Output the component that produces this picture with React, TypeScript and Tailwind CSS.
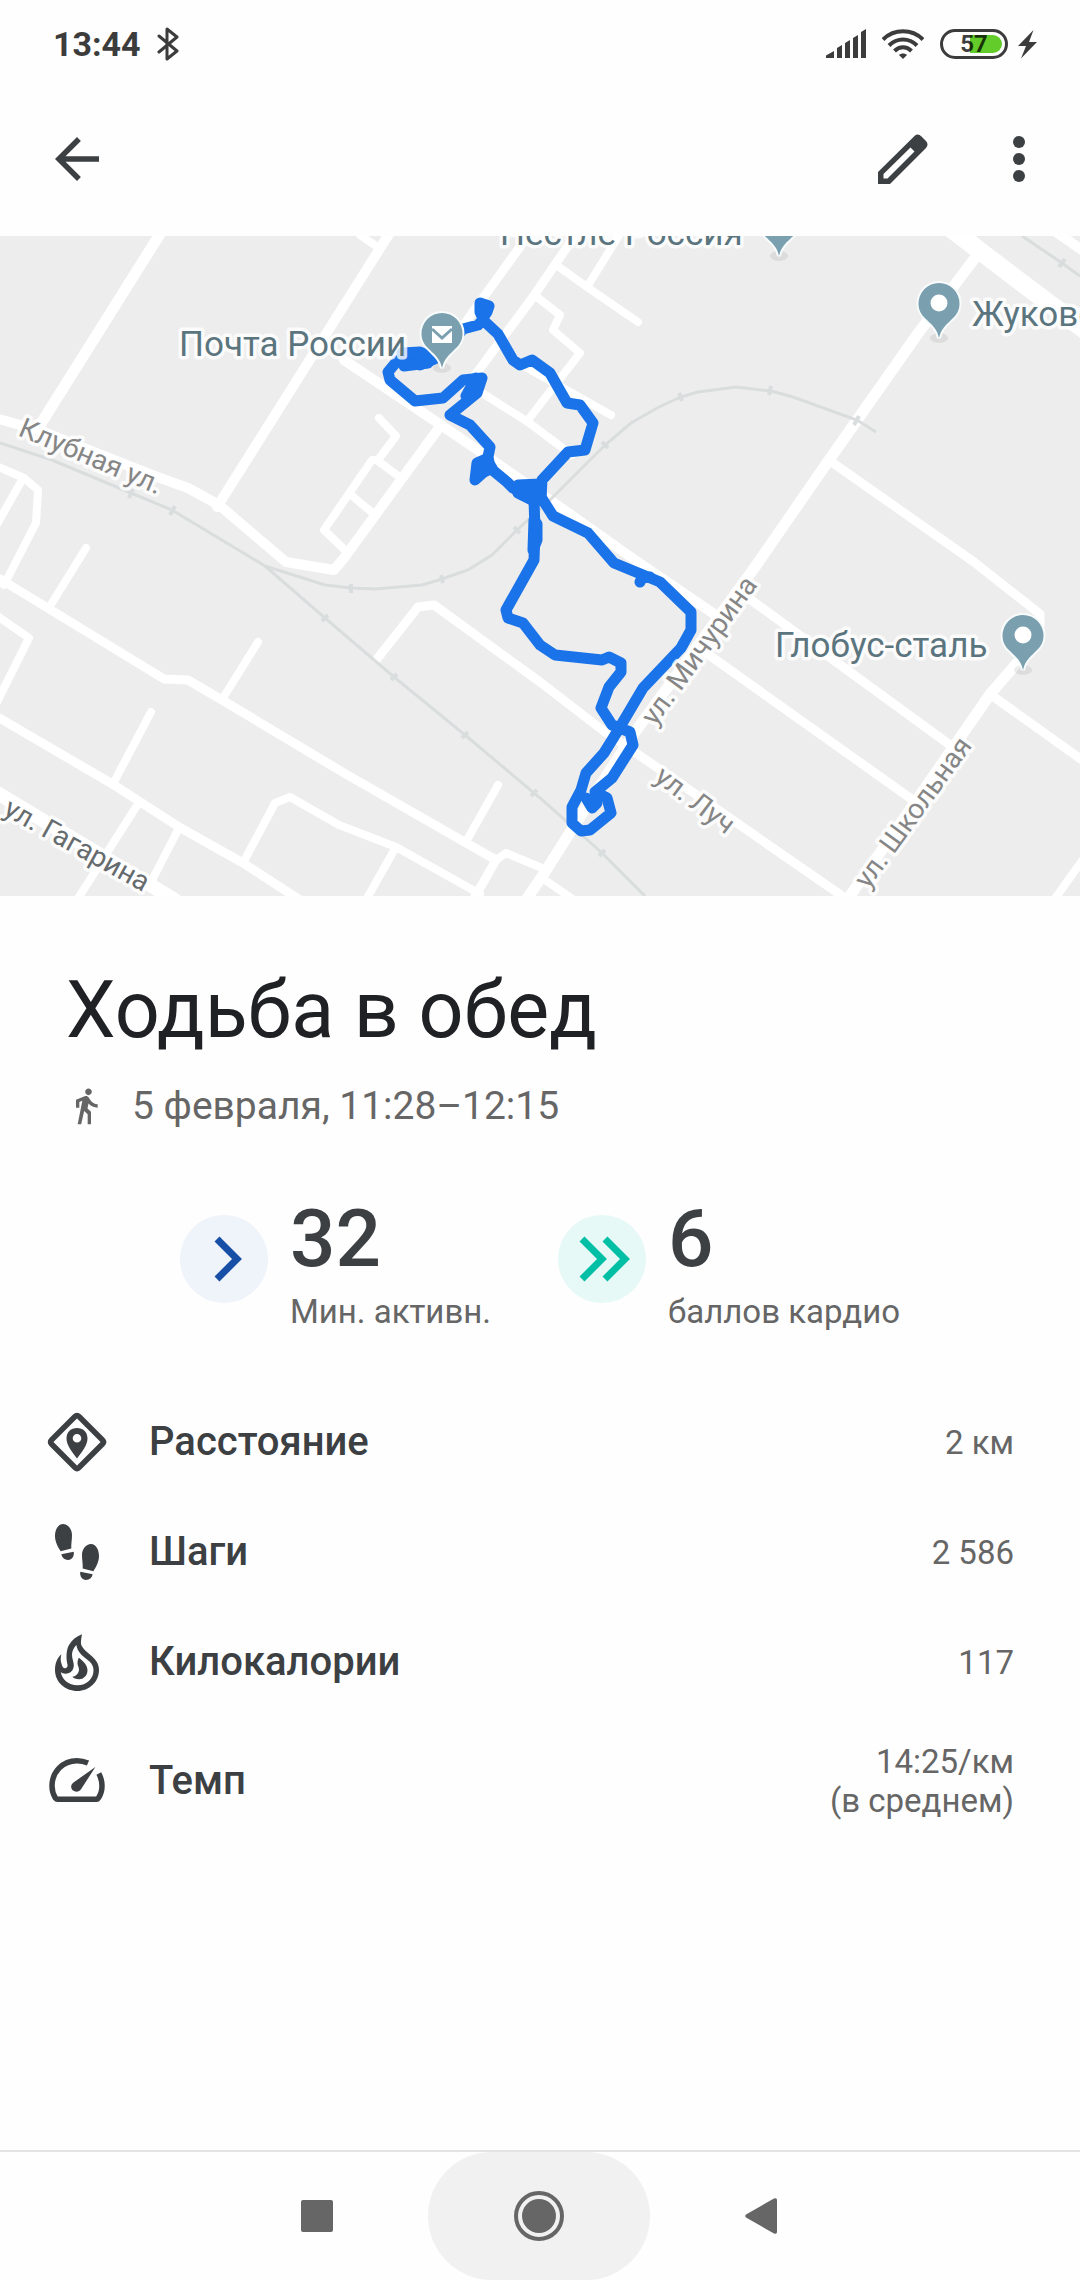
import type { ReactNode } from "react";
import { MdArrowBack, MdDirectionsWalk } from "react-icons/md";

/* -------------------------------------------------------------------------- */
/* Data                                                                       */
/* -------------------------------------------------------------------------- */

interface Road {
  d: string;
  width?: number;
}

interface StreetLabel {
  text: string;
  x: number;
  y: number;
  angle: number;
  dark?: boolean;
}

interface Metric {
  label: string;
  value: string[];
  icon: ReactNode;
}

const ROADS: Road[] = [
  // north-west
  { d: "M160 234L40 425", width: 11 },
  { d: "M389 234L217 507", width: 10 },
  { d: "M360 235L379 248" },
  { d: "M-5 418L38 430L152 475L188 488L219 505L286 562L334 570L344 558L441 425", width: 10 },
  { d: "M344 360L441 425L482 453L550 500L635 560L720 618", width: 10 },
  { d: "M379 418L396 436L378 460H372L324 530L348 553" },
  { d: "M378 461L401 478M351 495L374 514" },
  // centre block
  { d: "M522 244L455 337", width: 9 },
  { d: "M576 234L533 297L473 378", width: 9 },
  { d: "M620 234L587 287M559 267L587 287L638 322" },
  { d: "M537 297L560 315L553 330L580 353L528 420" },
  { d: "M482 393L528 422L572 455" },
  { d: "M522 365L611 415" },
  // east
  { d: "M950 228L1022 283L1090 334", width: 18 },
  { d: "M1056 232L1085 252", width: 10 },
  { d: "M975 258L919 332L829 460L755 567L633 735L583 812L545 872L526 900", width: 11 },
  { d: "M833 463L974 562L1040 614V625", width: 9 },
  { d: "M1024 655L991 693L850 896", width: 11 },
  { d: "M994 697L1085 762", width: 9 },
  { d: "M747 597L950 745", width: 9 },
  { d: "M702 650L910 798", width: 9 },
  { d: "M1084 858L1054 900" },
  { d: "M377 659L418 607L434 605L540 682L605 732L636 753L845 898", width: 9 },
  // south-west
  { d: "M-4 466L24 478L38 490L36 523L4 585" },
  { d: "M22 480L-4 526M86 548L52 603" },
  { d: "M-4 577L5 582L164 679L188 680L222 700L344 773L496 860L472 902", width: 9 },
  { d: "M496 860L506 853L542 868M545 880L574 900" },
  { d: "M-4 615L29 638L-4 704" },
  { d: "M-4 716L114 785L179 827L243 863L300 900", width: 9 },
  { d: "M223 698L258 642M114 782L151 712M467 840L498 785" },
  { d: "M136 807L77 900M179 828L150 884" },
  { d: "M243 863L275 803L290 797L339 825L396 847L480 894M396 847L366 900" },
  { d: "M-6 791L175 900", width: 14 },
];

const RAILS = [
  "M0 443L52 460L131 493L172 510L255 560L265 566L325 618L394 677L465 735L540 798L602 853L645 896",
  "M265 566L325 585L351 588L375 589L422 585L442 579L468 570L492 555L517 530L550 500L605 445L631 423L659 407L681 397L698 392L736 387L771 391L793 397L857 420L876 432",
  "M1022 236L1062 263L1080 276",
];

const RAIL_TIES =
  "M129 498L133 489M170 515L175 506M322 621L328 615M391 680L397 674M462 738L468 732M531 796L537 790M599 856L605 850M351 584V593M441 575L443 583M514 527L520 533M602 442L608 448M679 393L682 401M771 386L769 395M859 416L854 425M1065 259L1059 267";

const ROUTE =
  "M483 305V320L498 334L513 360L520 365L532 360L550 373L567 403L580 405L593 423L585 450L568 452L542 480L541 497L553 516L588 533L614 563L648 577L660 582L691 612V630L681 648L643 688L617 732L604 753L586 773L581 790L572 807V823L581 831L590 830L611 813L607 798L595 792L612 778L633 745L630 732L612 725L601 708L609 687L621 672V663L609 657L602 660L555 655L540 645L523 623L508 618L506 610L534 560L535 530L534 500L513 488L507 482L490 468L488 457L490 447L470 425L450 415L477 393L482 378L463 380L443 398L415 401L390 380L388 372L398 360L420 365L437 358L463 329L478 325L483 320";

// Places where the tracker lingered and the line piles up on itself
const ROUTE_KNOTS =
  "M480 303L489 306L487 312L483 318L480 312ZM402 353L420 352L432 357L428 363L404 366ZM477 463L486 459L492 468L484 472L475 480ZM476 378L480 380L474 392L466 396ZM518 485L541 484L541 495L532 500L518 493ZM534 520L537 524V540L533 550ZM640 582L642 578L650 577M586 798L592 808L597 803Z";

const STREETS: StreetLabel[] = [
  { text: "Клубная ул.", x: 17, y: 435, angle: 23 },
  { text: "ул. Мичурина", x: 655, y: 727, angle: -54 },
  { text: "ул. Школьная", x: 868, y: 890, angle: -54 },
  { text: "ул. Луч", x: 653, y: 780, angle: 37 },
  { text: "ул. Гагарина", x: 2, y: 814, angle: 29, dark: true },
];

/* -------------------------------------------------------------------------- */
/* Icons                                                                      */
/* -------------------------------------------------------------------------- */

function DistanceIcon() {
  return (
    <svg viewBox="0 0 60 60" className="size-[60px]" fill="none" aria-hidden="true">
      <path
        d="M28 4.500Q30 2.500 32 4.500L55.500 28Q57.500 30 55.500 32L32 55.500Q30 57.500 28 55.500L4.500 32Q2.500 30 4.500 28Z"
        stroke="currentColor"
        strokeWidth="5.500"
      />
      <path
        fillRule="evenodd"
        fill="currentColor"
        d="M30 16C24 16 19.500 20 19.500 26.500C19.500 33 25 40 30 46.500C35 40 40.500 33 40.500 26.500C40.500 20 36 16 30 16ZM30 22A4.300 4.300 0 1 1 30 30.600A4.300 4.300 0 1 1 30 22Z"
      />
    </svg>
  );
}

function StepsIcon() {
  const foot = (
    <>
      <path d="M16 2C11 2 8 8 8 14C8 20 11 25 13.600 29.200L24.300 26.600C24 22 25 18 25 13C25 7 21 2 16 2Z" />
      <path d="M14.300 32.300L26.700 29.700C27.500 34 25 38 21 38C17.500 38 15.300 36 14.300 32.300Z" />
    </>
  );
  return (
    <svg viewBox="0 0 60 60" className="size-[60px]" fill="currentColor" aria-hidden="true">
      {foot}
      <g transform="translate(60 20) scale(-1 1)">{foot}</g>
    </svg>
  );
}

function FlameIcon() {
  return (
    <svg viewBox="0 0 60 60" className="size-[60px]" fill="currentColor" aria-hidden="true">
      <path
        fillRule="evenodd"
        d="M35 2.300C34 8 33.500 11 34.500 13.500C36 17 40 20 43.500 23C49 27.500 52 32 52 38C52 50 42 59 30.500 59C18 59 8 50 8 38C8 32 10 26 14.300 22.300C13.500 26 13.500 29 14.300 31C15 34 16 36 17.500 36.300C19.500 36.500 21 35 20.500 32.500C19 27 19 18 22 13C25 8 29 4.500 35 2.300ZM29.400 13C26.500 16 25 19 25 23C25 27 27 30 26.800 34C26.500 38.500 23 41.800 18.500 41.700C16.500 41.600 15 41 13.800 40C15 47.500 21.500 53.300 30.500 53.300C39.500 53.300 46.500 47 46.500 38.300C46.500 33 43.500 30 39.500 27C35 23.500 30.500 20 29.400 13Z"
      />
      <path d="M31.900 25.700C37 29.500 40.500 33.500 40.500 38.300C40.500 44 36 47.500 32 47.300C29 47.200 26.500 46.500 25.300 44.800C28.500 44.500 31.500 42 32 38C32.200 35 30.500 34 30.500 31C30.500 29 31 27.500 31.900 25.700Z" />
    </svg>
  );
}

function PaceIcon() {
  return (
    <svg viewBox="0 0 60 60" className="size-[60px]" fill="none" aria-hidden="true">
      <path
        d="M41 12C37.500 10.500 34 9.700 30 9.700C15.500 9.700 5 21 5 35C5 40 6.500 44 8.500 47.200Q9.300 48.300 10.500 48.300H49.500Q50.700 48.300 51.300 47.200C53.500 44 55 40 55 35C55 30 54 26.500 51.800 22.500"
        stroke="currentColor"
        strokeWidth="5.500"
      />
      <path
        d="M48.400 16L34.500 37.500C32.500 41 28.500 41.500 26 39.500C23.500 37.500 23.500 33.500 26.500 31.500Z"
        fill="currentColor"
      />
    </svg>
  );
}

const METRICS: Metric[] = [
  { label: "Расстояние", value: ["2 км"], icon: <DistanceIcon /> },
  { label: "Шаги", value: ["2 586"], icon: <StepsIcon /> },
  { label: "Килокалории", value: ["117"], icon: <FlameIcon /> },
  { label: "Темп", value: ["14:25/км", "(в среднем)"], icon: <PaceIcon /> },
];

/* -------------------------------------------------------------------------- */
/* Sections                                                                   */
/* -------------------------------------------------------------------------- */

function StatusBar() {
  return (
    <div className="flex h-[88px] items-center justify-between pr-[43px] pl-[53px] text-[#3c3c3c]">
      <div className="flex items-center gap-4">
        <span className="text-[34px] leading-10 font-bold">13:44</span>
        <svg viewBox="0 0 22 34" className="h-[34px] w-[22px]" fill="none" aria-label="Bluetooth">
          <path
            d="M2 9L20 24L10 32V2L20 10L2 25"
            stroke="currentColor"
            strokeWidth="3"
            strokeLinecap="round"
            strokeLinejoin="round"
          />
        </svg>
      </div>
      <div className="flex items-center">
        <svg viewBox="0 0 40 30" className="h-[30px] w-10" fill="currentColor" aria-label="Сигнал">
          <path d="M0 29V26.500L8 22V29ZM11 29V19L16 16V29ZM19 29V14L24 11V29ZM27 29V9L32 6V29ZM35 29V3L40 0V29Z" />
        </svg>
        <svg viewBox="0 0 42 30" className="ml-4 h-[30px] w-[42px]" fill="none" aria-label="Wi-Fi">
          <g stroke="currentColor" strokeWidth="4">
            <path d="M1 10.500C12 -0.500 30 -0.500 41 10.500" />
            <path d="M7 16.500C15 8.500 27 8.500 35 16.500" />
            <path d="M12.500 22C17.500 17 24.500 17 29.500 22" />
          </g>
          <path d="M17 26C19 24 23 24 25 26L21 30Z" fill="currentColor" />
        </svg>
        <div className="relative ml-4 flex h-[30px] w-[68px] items-center justify-center overflow-hidden rounded-full border-[3px] border-[#3c3c3c]">
          <div className="absolute inset-y-[3px] right-[3px] w-8 rounded-r-full bg-[#63cc2b]" />
          <span className="relative text-[24px] leading-6 font-bold text-black/75">57</span>
        </div>
        <svg viewBox="0 0 19 30" className="ml-[10px] h-[30px] w-[19px]" fill="currentColor" aria-label="Зарядка">
          <path d="M15.500 1L0 17H8L3 29.500L19 13H11Z" />
        </svg>
      </div>
    </div>
  );
}

function AppBar() {
  return (
    <header className="flex h-[148px] items-center justify-between pr-[30px] pb-[6px] pl-11 text-[#3c4043]">
      <button type="button" aria-label="Назад">
        <MdArrowBack className="size-[66px]" />
      </button>
      <div className="flex items-center gap-[60px]">
        <button type="button" aria-label="Изменить">
          <svg viewBox="0 0 50 50" className="size-[50px]" fill="currentColor">
            <path
              fillRule="evenodd"
              d="M0 38V50H12L48 14Q51 10.500 48 7L43.500 2.500Q40 -1 36.500 2ZM5.500 40L32.500 13.500L36.500 17.500L9.500 44.500H5.500Z"
            />
          </svg>
        </button>
        <button type="button" aria-label="Ещё" className="flex w-[62px] flex-col items-center gap-[5px]">
          <span className="size-3 rounded-full bg-current" />
          <span className="size-3 rounded-full bg-current" />
          <span className="size-3 rounded-full bg-current" />
        </button>
      </div>
    </header>
  );
}

function Pin({ x, y, mail = false }: { x: number; y: number; mail?: boolean }) {
  return (
    <g transform={`translate(${x} ${y})`}>
      <ellipse cx="0" cy="0" rx="9" ry="5" fill="#000" opacity="0.07" />
      <path
        d="M0 0C-2 -9 -6 -12 -12 -18C-18 -23 -20.500 -28 -20.500 -34.500A20.500 20.500 0 1 1 20.500 -34.500C20.500 -28 18 -23 12 -18C6 -12 2 -9 0 0Z"
        fill="#7a9fae"
        stroke="#f8fbfc"
        strokeWidth="4"
        paintOrder="stroke"
      />
      {mail ? (
        <>
          <rect x="-10" y="-42" width="20" height="17" fill="#fff" />
          <path d="M-10 -39L0 -30L10 -39" stroke="#7a9fae" strokeWidth="3" fill="none" />
        </>
      ) : (
        <circle cx="0" cy="-35" r="8.500" fill="#fff" />
      )}
    </g>
  );
}

function RouteMap() {
  return (
    <svg
      viewBox="0 236 1080 660"
      preserveAspectRatio="xMidYMid slice"
      className="h-[660px] w-full bg-[#ededed]"
      role="img"
      aria-label="Карта маршрута"
    >
      <g fill="none" stroke="#fff" strokeLinecap="round" strokeLinejoin="round">
        {ROADS.map((r) => (
          <path key={r.d} d={r.d} strokeWidth={r.width ?? 8} />
        ))}
      </g>
      <g fill="none" stroke="#dadddd" strokeWidth="3">
        {RAILS.map((d) => (
          <path key={d} d={d} />
        ))}
        <path d={RAIL_TIES} strokeWidth="4" />
      </g>
      <g stroke="#1a73e8" strokeWidth="11" strokeLinecap="round" strokeLinejoin="round">
        <path d={ROUTE} fill="none" />
        <path d={ROUTE_KNOTS} fill="#1a73e8" />
      </g>
      <g
        stroke="#fff"
        strokeOpacity="0.8"
        strokeWidth="7"
        strokeLinejoin="round"
        paintOrder="stroke"
        fontSize="28"
      >
        {STREETS.map((s) => (
          <text
            key={s.text}
            transform={`translate(${s.x} ${s.y}) rotate(${s.angle})`}
            fill={s.dark ? "#666b6e" : "#868686"}
          >
            {s.text}
          </text>
        ))}
        <g fill="#5b757f" fontSize="35">
          <text x="500" y="245">
            Нестле Россия
          </text>
          <text x="179" y="356">
            Почта России
          </text>
          <text x="972" y="326">
            Жуковский
          </text>
          <text x="775" y="657">
            Глобус-сталь
          </text>
        </g>
      </g>
      <Pin x={779} y={256} />
      <Pin x={442} y={368} mail />
      <Pin x={939} y={338} />
      <Pin x={1023} y={670} />
    </svg>
  );
}

function Stat({ value, label, children, tint }: { value: string; label: string; children: ReactNode; tint: string }) {
  return (
    <div className="flex items-start gap-[22px]">
      <span className={`mt-5 flex size-[88px] items-center justify-center rounded-full ${tint}`}>{children}</span>
      <div>
        <div className="text-[80px] leading-[88px] font-medium text-[#3c4043]">{value}</div>
        <div className="mt-1 text-[33px] leading-[50px] text-[#666]">{label}</div>
      </div>
    </div>
  );
}

function NavBar() {
  return (
    <nav className="mt-auto flex h-[130px] items-stretch justify-center border-t-2 border-[#e4e4e4] pr-0.5 text-[#666]">
      <button type="button" aria-label="Недавние" className="flex w-[222px] items-center justify-center">
        <span className="size-8 rounded-xs bg-current" />
      </button>
      <button
        type="button"
        aria-label="Домой"
        className="flex w-[222px] items-center justify-center rounded-[64px] bg-[#f1f1f1]"
      >
        <span className="flex size-[50px] items-center justify-center rounded-full border-4 border-current">
          <span className="size-[34px] rounded-full bg-current" />
        </span>
      </button>
      <button type="button" aria-label="Назад" className="flex w-[222px] items-center justify-center">
        <svg viewBox="0 0 32 36" className="h-9 w-8" fill="currentColor">
          <path d="M1 16.500L29 0.500Q32 -0.500 32 2V34Q32 36.500 29 35.500L1 19.500Q-0.500 18 1 16.500Z" />
        </svg>
      </button>
    </nav>
  );
}

/* -------------------------------------------------------------------------- */
/* Page                                                                       */
/* -------------------------------------------------------------------------- */

export default function App() {
  return (
    <div className="flex min-h-screen flex-col bg-[#fefefe] font-['Roboto',sans-serif]">
      <StatusBar />
      <AppBar />
      <RouteMap />

      <main>
        <section className="px-[66px] pt-[64px]">
          <h1 className="text-[79px] leading-[100px] text-[#202124]">Ходьба в обед</h1>
          <p className="mt-6 flex items-center gap-[26px] text-[39px] leading-[44px] text-[#666]">
            <MdDirectionsWalk className="size-10" aria-hidden="true" />
            5 февраля, 11:28–12:15
          </p>
        </section>

        <section className="mt-[67px] flex justify-center gap-[67px]">
          <Stat value="32" label="Мин. активн." tint="bg-[#eff3fa]">
            <svg viewBox="0 0 88 88" className="size-[88px]" fill="none">
              <path d="M37 24L57 44L37 64" stroke="#174ea6" strokeWidth="7" />
            </svg>
          </Stat>
          <Stat value="6" label="баллов кардио" tint="bg-[#e6f9f6]">
            <svg viewBox="0 0 88 88" className="size-[88px]" fill="none">
              <path d="M24 24L44 44L24 64M47 24L67 44L47 64" stroke="#00bfa5" strokeWidth="7" />
            </svg>
          </Stat>
        </section>

        <dl className="mt-[50px] pr-[66px] pl-[47px]">
          {METRICS.map((m) => (
            <div key={m.label} className="flex items-center py-[25px]">
              <dt className="flex flex-1 items-center gap-[42px] text-[40px] leading-[46px] font-medium text-[#3c4043]">
                {m.icon}
                {m.label}
              </dt>
              <dd className="text-right text-[33px] leading-[39px] text-[#666]">
                {m.value.map((line) => (
                  <div key={line}>{line}</div>
                ))}
              </dd>
            </div>
          ))}
        </dl>
      </main>

      <NavBar />
    </div>
  );
}
